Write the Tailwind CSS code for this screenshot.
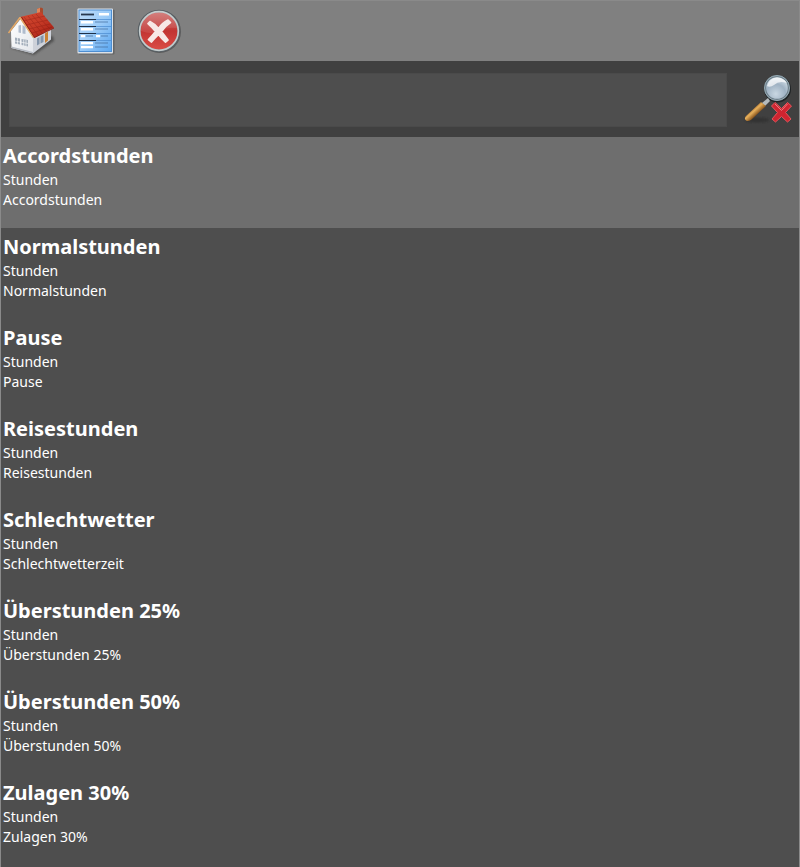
<!DOCTYPE html>
<html lang="de">
<head>
  <meta charset="UTF-8" />
  <meta name="viewport" content="width=device-width, initial-scale=1.0" />
  <title>Lohnarten</title>
  <script src="https://cdn.jsdelivr.net/npm/@tailwindcss/browser@4"></script>
</head>
<body class="bg-[#4e4e4e] min-h-screen border-x border-t border-[#8a8a8a] text-white font-['Segoe_UI','Noto_Sans',sans-serif] overflow-x-hidden">

  <!-- Toolbar -->
  <header class="flex h-15 bg-[#808080]">
    <button type="button" aria-label="Startseite" class="w-16 h-15">
      <svg viewBox="1 1 64 60" class="w-full h-full">
        <defs>
          <linearGradient id="roof" x1="0" y1="0" x2="1" y2="1">
            <stop offset="0" stop-color="#d24a30" />
            <stop offset=".5" stop-color="#c63a26" />
            <stop offset="1" stop-color="#9c170e" />
          </linearGradient>
          <linearGradient id="wall" x1="0" y1="0" x2="1" y2="1">
            <stop offset="0" stop-color="#ffffff" />
            <stop offset="1" stop-color="#e2e5ea" />
          </linearGradient>
          <filter id="soft" x="-20%" y="-20%" width="140%" height="140%"><feGaussianBlur stdDeviation="1.2" /></filter>
        </defs>
        <path d="M11 48L34 55L54 41L53 36L12 42Z" fill="#333" opacity=".6" filter="url(#soft)" />
        <path d="M33 36L51 27V39.500L33 53.500Z" fill="#cdd1d9" />
        <path d="M11 31L20.500 19L33 36V53.500L11.500 48Z" fill="url(#wall)" />
        <path d="M11.500 46.500L33 52V53.500L11.500 48Z" fill="#b4b9c2" />
        <path d="M37 9L41 7.500L43 8.500V17L37 14Z" fill="#a94a2c" />
        <path d="M37 9L40 7.800V15L37 14Z" fill="#e08558" />
        <path d="M20 17L41 12L54 27.500L34 38Z" fill="url(#roof)" />
        <path d="M24 17L38 35M28 16L42 33M32 15L46 31M36 14L50 29M23 21L45 16M26 25L48 20M29 29L50 24M32 33L52 27" stroke="#7c140d" stroke-width=".6" opacity=".5" />
        <path d="M20 17.500L8.500 33M20 17.500L33.500 37.500" fill="none" stroke="#e3a765" stroke-width="1.500" />
        <path d="M21.500 17L34.500 37.500L54 28" fill="none" stroke="#8f2018" stroke-width="1" />
        <path d="M18.500 25.500L21 25V33L18.500 32.500ZM22.500 25L25.500 27V34L22.500 33.500Z" fill="#b0bccd" />
        <path d="M15 37.500L20 38.500V44.500L15 43.500ZM21.500 39L28 40V46.500L21.500 45Z" fill="#a3aebb" />
        <path d="M17.500 38V44M15 41L28 43.500M23.700 39.500V46M26 40V46.500" stroke="#fff" stroke-width=".6" />
        <path d="M37 38.500L39.500 37V44L37 45.500ZM40.500 36.500L43.500 35V42L40.500 43.500Z" fill="#8395ab" />
        <path d="M45 33.500L48 31.500V40.500L45 43Z" fill="#c98032" />
      </svg>
    </button>
    <button type="button" aria-label="Formular" class="w-16 h-15">
      <svg viewBox="65 1 64 60" class="w-full h-full">
        <defs>
          <linearGradient id="sheet" x1="0" y1="0" x2="1" y2="1">
            <stop offset="0" stop-color="#bfdcf8" />
            <stop offset=".5" stop-color="#9bcbf8" />
            <stop offset="1" stop-color="#5aa6f0" />
          </linearGradient>
        </defs>
        <rect x="78.500" y="9.500" width="36" height="45" rx="1" fill="#555" opacity=".6" />
        <rect x="77.500" y="8.500" width="35.500" height="45" rx="1" fill="#dce1e7" />
        <rect x="79" y="10" width="32.500" height="41.500" fill="url(#sheet)" stroke="#4d8ed2" stroke-width="1" />
        <path d="M81 14.500H94" stroke="#28384e" stroke-width="1.800" />
        <path d="M79 19.500H96M79 26.500H96M79 33.500H96M79 40.500H96" stroke="#1e3048" stroke-width="1.200" />
        <path d="M96 19.500H111M96 26.500H111M96 33.500H111M96 40.500H111" stroke="#4b8bd0" stroke-width=".7" />
        <path d="M99 13H109V15.500H99ZM81 21H93V23.500H81ZM81 28H93V30.500H81ZM81 35H85V37.200H81ZM96 35H100V37.200H96ZM81 42H93V44.200H81ZM81 46H93V48.200H81Z" fill="#fff" />
        <path d="M95 22H108M95 29H108M86 36H93M101 36H108M95 43H108M95 47H108" stroke="#47709f" stroke-width="1.200" opacity=".75" />
      </svg>
    </button>
    <button type="button" aria-label="Abbrechen" class="w-16 h-15">
      <svg viewBox="129 1 64 60" class="w-full h-full">
        <defs>
          <linearGradient id="red" x1="0" y1="0" x2="0" y2="1">
            <stop offset="0" stop-color="#cf7674" />
            <stop offset=".5" stop-color="#c23432" />
            <stop offset="1" stop-color="#dc4e47" />
          </linearGradient>
        </defs>
        <circle cx="159.500" cy="31.500" r="21.500" fill="#444" opacity=".6" />
        <circle cx="159" cy="31" r="20" fill="url(#red)" stroke="#596166" stroke-width="2.500" />
        <circle cx="159" cy="31" r="19.300" fill="none" stroke="#c3cccd" stroke-width="1.700" />
        <path d="M141 31A18 18 0 0 1 177 28Q166 27 159 31T141 31Z" fill="#fff" opacity=".1" />
        <path d="M150 21.500Q155 24 158.500 28.500Q162 23 168 20L170.500 22.500Q165 26 161.500 31.500Q165 36 168 40L165.500 42Q161 38 158.500 34.500Q155 38 151.500 42L148.500 39.500Q152 36 155.500 31.500Q152 27 148 23.500Z" fill="#f7e8e6" stroke="#f7e8e6" stroke-width="1.700" stroke-linejoin="round" />
      </svg>
    </button>
  </header>

  <!-- Search -->
  <form class="flex h-19 bg-[#404040] pl-2" onsubmit="return false">
    <input type="text" aria-label="Suche" class="my-3 mb-[10px] flex-1 min-w-0 bg-[#4e4e4e] border border-[#4a4a4a] px-2 text-xl outline-none" />
    <button type="reset" aria-label="Suche löschen" class="w-18 h-19">
      <svg viewBox="727 61 72 76" class="w-full h-full">
        <defs>
          <radialGradient id="lens" cx=".45" cy=".75" r=".75">
            <stop offset="0" stop-color="#c9d7e2" />
            <stop offset=".55" stop-color="#9fb2c3" />
            <stop offset="1" stop-color="#d9e5ed" />
          </radialGradient>
          <linearGradient id="grip" x1="0" y1="0" x2="1" y2="1">
            <stop offset=".3" stop-color="#8a501c" />
            <stop offset=".45" stop-color="#e8b15c" />
            <stop offset=".65" stop-color="#74400f" />
          </linearGradient>
        </defs>
        <ellipse cx="757" cy="120" rx="12" ry="2.500" fill="#222" opacity=".45" filter="url(#soft)" />
        <circle cx="777.500" cy="89" r="13.500" fill="#171b1e" opacity=".8" />
        <path d="M762 103L768 98L770 101L765 106Z" fill="#b4babd" />
        <path d="M761 102L766 106L751 120Q747 122 745.500 120Q744 118 746 116Z" fill="url(#grip)" />
        <circle cx="777" cy="88" r="11.800" fill="url(#lens)" stroke="#6d7e88" stroke-width="2" />
        <circle cx="777" cy="88" r="12.500" fill="none" stroke="#a5bac4" stroke-width=".8" />
        <path d="M767 86Q769 78 777 77.500Q784 78 787 83Q779 80 774 85Q770 88 767 86Z" fill="#fff" opacity=".7" />
        <path d="M775 102.500L781.500 108.500L787.500 102.500L791.500 106L785.500 112.500L791 119L787.500 122L781.500 116.500L775.500 122L772 119L777.500 112.500L771.500 106Z" fill="#d02430" stroke="#e4555c" stroke-width="1" stroke-linejoin="round" />
        <path d="M775 104L781.500 110.500L787.500 104" fill="none" stroke="#ea7d80" stroke-width="1" />
      </svg>
    </button>
  </form>

  <ul id="list"></ul>

  <script>
    const items = [
      ["Accordstunden", "Stunden", "Accordstunden"],
      ["Normalstunden", "Stunden", "Normalstunden"],
      ["Pause", "Stunden", "Pause"],
      ["Reisestunden", "Stunden", "Reisestunden"],
      ["Schlechtwetter", "Stunden", "Schlechtwetterzeit"],
      ["Überstunden 25%", "Stunden", "Überstunden 25%"],
      ["Überstunden 50%", "Stunden", "Überstunden 50%"],
      ["Zulagen 30%", "Stunden", "Zulagen 30%"]
    ];

    const list = document.getElementById("list");

    items.forEach(([title, unit, description], index) => {
      const li = document.createElement("li");
      li.className = index === 0 ? "bg-[#6e6e6e] px-[2px] pt-1 pb-[18px]" : "px-[2px] pt-1 pb-[18px]";
      li.innerHTML = `
        <h2 class="text-[20px] leading-[29px] font-bold">${title}</h2>
        <p class="text-[14px] leading-5">${unit}</p>
        <p class="text-[14px] leading-5">${description}</p>
      `;
      list.appendChild(li);
    });
  </script>
</body>
</html>
